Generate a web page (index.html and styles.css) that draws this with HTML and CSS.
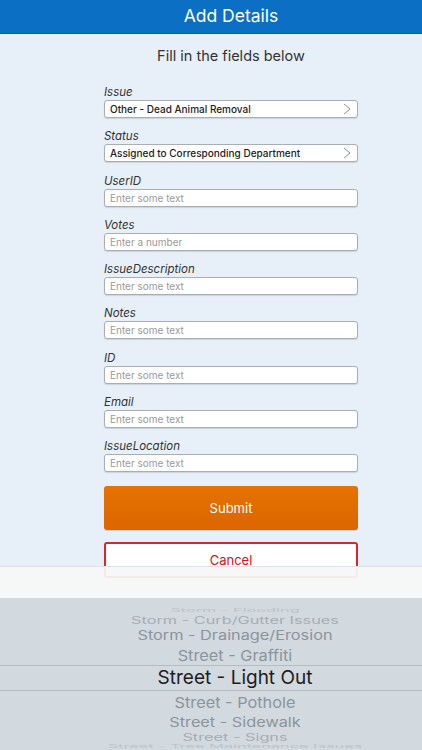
FILE: index.html
```html
<!DOCTYPE html>
<html>
<head>
<meta charset="utf-8">
<link rel="stylesheet" href="styles.css">
</head>
<body>
<div class="screen">
  <header class="topbar">Add Details</header>
  <main class="content">
    <p class="intro">Fill in the fields below</p>
    <form class="form">
      <div class="field">
        <label class="label">Issue</label>
        <div class="box select"><span class="value">Other - Dead Animal Removal</span><svg class="chev" viewBox="0 0 8 12" width="8" height="12"><path d="M1 1 L7 6 L1 11" fill="none" stroke="#8c8c8c" stroke-width="1"/></svg></div>
      </div>
      <div class="field">
        <label class="label">Status</label>
        <div class="box select"><span class="value">Assigned to Corresponding Department</span><svg class="chev" viewBox="0 0 8 12" width="8" height="12"><path d="M1 1 L7 6 L1 11" fill="none" stroke="#8c8c8c" stroke-width="1"/></svg></div>
      </div>
      <div class="field">
        <label class="label">UserID</label>
        <div class="box"><span class="ph">Enter some text</span></div>
      </div>
      <div class="field">
        <label class="label">Votes</label>
        <div class="box"><span class="ph">Enter a number</span></div>
      </div>
      <div class="field">
        <label class="label">IssueDescription</label>
        <div class="box"><span class="ph">Enter some text</span></div>
      </div>
      <div class="field">
        <label class="label">Notes</label>
        <div class="box"><span class="ph">Enter some text</span></div>
      </div>
      <div class="field">
        <label class="label">ID</label>
        <div class="box"><span class="ph">Enter some text</span></div>
      </div>
      <div class="field">
        <label class="label">Email</label>
        <div class="box"><span class="ph">Enter some text</span></div>
      </div>
      <div class="field">
        <label class="label">IssueLocation</label>
        <div class="box"><span class="ph">Enter some text</span></div>
      </div>
      <div class="btn submit">Submit</div>
      <div class="btn cancel">Cancel</div>
    </form>
  </main>
  <div class="sheet">
    <div class="toolbar"></div>
    <div class="picker">
      <div class="item i0">Storm - Flooding</div>
      <div class="item i1">Storm - Curb/Gutter Issues</div>
      <div class="item i2">Storm - Drainage/Erosion</div>
      <div class="item i3">Street - Graffiti</div>
      <div class="item sel">Street - Light Out</div>
      <div class="item i3b">Street - Pothole</div>
      <div class="item i2b">Street - Sidewalk</div>
      <div class="item i1">Street - Signs</div>
      <div class="item i0">Street - Tree Maintenance Issues</div>
    </div>
  </div>
</div>
</body>
</html>
```
FILE: styles.css
```css
html, body {
  margin: 0;
  padding: 0;
}
body {
  font-family: Inter, "Liberation Sans", Arial, sans-serif;
}
.screen {
  position: relative;
  width: 422px;
  height: 750px;
  overflow: hidden;
  background: #e7f0f8;
}
.topbar {
  box-sizing: border-box;
  height: 34px;
  padding-left: 40px;
  background: #0b70c3;
  color: #fff;
  font-size: 17.5px;
  line-height: 31px;
  text-align: center;
  border-bottom: 1px solid #0a5ea6;
}
.content {
  padding: 0 64px 0 104px;
}
.intro {
  margin: 13px 0 0 0;
  text-align: center;
  font-size: 14.5px;
  color: #333;
  width: 254px;
  line-height: 18px;
}
.form {
  width: 254px;
  margin-top: 19px;
}
.field {
  height: 44.25px;
}
.label {
  display: block;
  font-style: italic;
  font-size: 11.5px;
  color: #333;
  line-height: 16px;
  height: 16px;
}
.box {
  box-sizing: border-box;
  height: 18px;
  background: #fff;
  border: 1px solid #a9aeb3;
  border-radius: 3px;
  display: flex;
  align-items: center;
  padding: 0 5px;
  box-shadow: 0 1px 1px rgba(0,0,0,0.12);
}
.select {
  justify-content: space-between;
}
.value {
  font-size: 10px;
  font-weight: 500;
  color: #222;
}
.ph {
  font-size: 10px;
  color: #9a9a9a;
}
.chev {
  margin-right: 1px;
}
.btn {
  box-sizing: border-box;
  width: 254px;
  border-radius: 3px;
  display: flex;
  align-items: center;
  justify-content: center;
  font-size: 13px;
}
.submit {
  height: 44px;
  margin-top: 4px;
  background: linear-gradient(#e57200, #dc6600);
  color: #fff;
  box-shadow: 0 1px 1px rgba(0,0,0,0.15);
}
.cancel {
  height: 36px;
  margin-top: 12px;
  background: #fff;
  border: 2px solid #d9262d;
  color: #d0121a;
}
.sheet {
  position: absolute;
  left: 0;
  right: 0;
  bottom: 0;
  height: 184px;
}
.toolbar {
  height: 32px;
  background: rgba(247,247,247,0.94);
  border-top: 1px solid #dfe3e6;
  box-sizing: border-box;
}
.picker {
  height: 152px;
  background: #d2d9df;
  display: flex;
  flex-direction: column;
  align-items: center;
  padding-top: 9px;
  padding-left: 48px;
  box-sizing: border-box;
  overflow: hidden;
}
.item {
  color: #8c949b;
  text-align: center;
  white-space: nowrap;
  font-size: 16.3px;
}
.i0 {
  height: 7px;
  line-height: 7px;
  transform: scaleY(0.3);
  color: #bcc3c9;
}
.i1 {
  height: 12px;
  line-height: 12px;
  transform: scaleY(0.6);
  color: #a6adb3;
}
.i2, .i2b {
  height: 19px;
  line-height: 19px;
  transform: scaleY(0.8);
}
.i2b {
  height: 18px;
  line-height: 18px;
}
.i3 {
  height: 20px;
  line-height: 20px;
  transform: scaleY(0.93);
}
.i3b {
  height: 22px;
  line-height: 22px;
  transform: scaleY(0.93);
}
.sel {
  font-size: 19px;
  color: #1d1d1d;
  width: calc(100% + 48px);
  margin-left: -48px;
  padding-left: 48px;
  height: 26px;
  line-height: 24px;
  box-sizing: border-box;
  border-top: 1px solid #b5bcc2;
  border-bottom: 1px solid #b5bcc2;
}
```
